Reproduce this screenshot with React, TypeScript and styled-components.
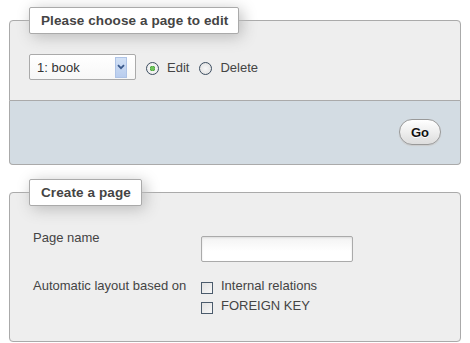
import React from "react";
import styled, { createGlobalStyle } from "styled-components";

const Global = createGlobalStyle`
  html, body { margin: 0; padding: 0; background: #fff; }
  body {
    font-family: "Liberation Sans", Arial, sans-serif;
    font-size: 13px;
    line-height: 15px;
    color: #444;
  }
`;

const Page = styled.div`
  padding: 7px 9px 0 9px;
  display: flex;
  flex-direction: column;
  gap: 14px;
`;

const Panel = styled.section`
  display: flex;
  flex-direction: column;
`;

const Fieldset = styled.fieldset<{ $hasFooter?: boolean }>`
  margin: 0;
  padding: 0 19px;
  border: 1px solid #aaa;
  border-radius: ${(p) => (p.$hasFooter ? "4px 4px 0 0" : "4px")};
  background: #eee;
  min-inline-size: 0;
`;

const Legend = styled.legend`
  margin: 0;
  padding: 5px 10px 5px 11px;
  border: 1px solid #aaa;
  border-radius: 2px;
  background: #fff;
  font-weight: bold;
  font-size: 13.5px;
  letter-spacing: 0.1px;
  color: #444;
  line-height: 15px;
  box-shadow: 3px 3px 15px #bbb;
`;

const ChooseBody = styled.div`
  padding: 20px 0 20px;
  display: flex;
  align-items: center;
`;

const Select = styled.div`
  box-sizing: border-box;
  width: 107px;
  height: 26px;
  border: 1px solid #aaa;
  border-radius: 2px;
  background: linear-gradient(#fff, #f7f7f7);
  display: flex;
  align-items: center;
  justify-content: space-between;
  padding: 0 8px 0 7px;
  color: #333;
  margin-right: 10px;
`;

const ArrowButton = styled.span`
  box-sizing: border-box;
  width: 12px;
  height: 21px;
  border: 1px solid #aec3e6;
  background: linear-gradient(#d2e1f6, #b9cdee);
  display: flex;
  align-items: center;
  justify-content: center;
`;

const RadioLabel = styled.label`
  display: flex;
  align-items: center;
  gap: 8px;
  margin-right: 10px;
  color: #444;
`;

const Radio = styled.span<{ $checked?: boolean }>`
  box-sizing: border-box;
  width: 13px;
  height: 13px;
  border-radius: 50%;
  border: 1px solid #3c4d60;
  background: ${(p) =>
    p.$checked
      ? "radial-gradient(circle, #6fc35a 0 2px, #2f8a2a 2.5px, #f4f4f4 3px, #e6e6e6 100%)"
      : "radial-gradient(circle, #f8f8f8 0, #dcdcdc 100%)"};
  margin-top: 2px;
`;

const Footer = styled.div`
  border: 1px solid #aaa;
  border-top: 0;
  border-radius: 0 0 4px 4px;
  background: #d3dce3;
  padding: 18px 19px 19px;
  display: flex;
  justify-content: flex-end;
`;

const GoButton = styled.button`
  box-sizing: border-box;
  height: 26px;
  width: 42px;
  padding: 0;
  border: 1px solid #999;
  border-radius: 13px;
  background: linear-gradient(#ffffff, #dddddd);
  font-family: "Liberation Sans", Arial, sans-serif;
  font-size: 13px;
  font-weight: bold;
  color: #111;
  text-shadow: 0 1px 0 #fff;
  box-shadow: 0 1px 1px #ccc;
`;

const FormGrid = styled.div`
  padding: 24px 0 23px;
  display: grid;
  grid-template-columns: 172px auto;
  row-gap: 16px;
`;

const Label = styled.div`
  padding-left: 4px;
  color: #444;
`;

const TextInput = styled.div`
  box-sizing: border-box;
  width: 152px;
  height: 26px;
  margin-top: 6px;
  border: 1px solid #aaa;
  border-radius: 2px;
  background: linear-gradient(#f3f3f3, #fff 60%);
  box-shadow: inset 0 1px 2px #ddd;
`;

const CheckList = styled.div`
  display: flex;
  flex-direction: column;
`;

const CheckItem = styled.label`
  height: 20px;
  display: flex;
  align-items: flex-start;
  gap: 8px;
  color: #444;
`;

const CheckBox = styled.span`
  box-sizing: border-box;
  width: 12px;
  height: 12px;
  margin-top: 4px;
  border: 1px solid #4b5b6c;
  background: linear-gradient(135deg, #e1e1e1, #f8f8f8);
`;

export default function App() {
  return (
    <>
      <Global />
      <Page>
        <Panel>
          <Fieldset $hasFooter>
            <Legend>Please choose a page to edit</Legend>
            <ChooseBody>
              <Select>
                <span>1: book</span>
                <ArrowButton>
                  <svg width="8" height="6" viewBox="0 0 8 6">
                    <path d="M1 1.2 L4 4.2 L7 1.2" fill="none" stroke="#3b5a8c" strokeWidth="1.8" />
                  </svg>
                </ArrowButton>
              </Select>
              <RadioLabel>
                <Radio $checked />
                Edit
              </RadioLabel>
              <RadioLabel>
                <Radio />
                Delete
              </RadioLabel>
            </ChooseBody>
          </Fieldset>
          <Footer>
            <GoButton>Go</GoButton>
          </Footer>
        </Panel>
        <Panel>
          <Fieldset>
            <Legend>Create a page</Legend>
            <FormGrid>
              <Label>Page name</Label>
              <div>
                <TextInput />
              </div>
              <Label>Automatic layout based on</Label>
              <CheckList>
                <CheckItem>
                  <CheckBox />
                  Internal relations
                </CheckItem>
                <CheckItem>
                  <CheckBox />
                  FOREIGN KEY
                </CheckItem>
              </CheckList>
            </FormGrid>
          </Fieldset>
        </Panel>
      </Page>
    </>
  );
}
